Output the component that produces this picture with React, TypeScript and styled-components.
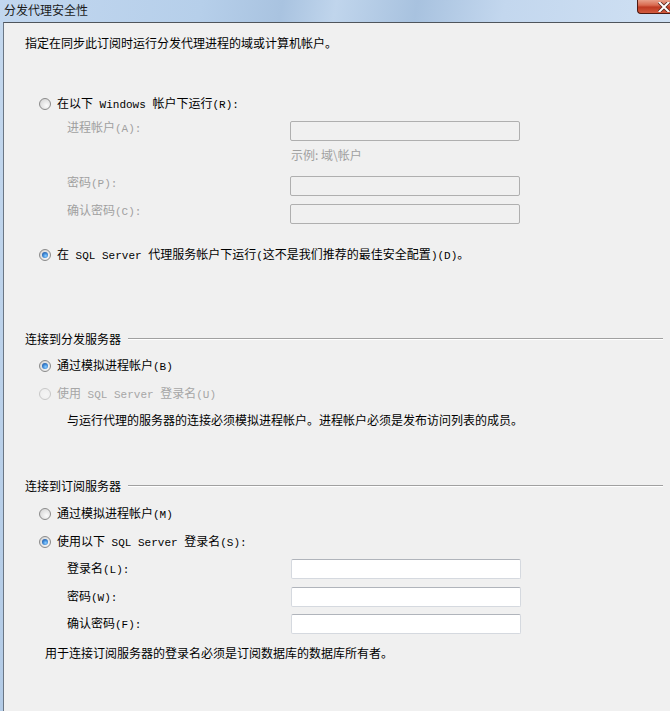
import React from 'react';
import styled, { createGlobalStyle } from 'styled-components';

const GlobalStyle = createGlobalStyle`
  html, body {
    margin: 0;
    padding: 0;
    background: #f0f0f0;
  }
  body {
    font-family: "Noto Sans CJK SC", "Noto Sans", sans-serif;
    font-size: 12px;
    color: #000;
  }
`;

const Window = styled.div`
  width: 670px;
  height: 711px;
  display: flex;
  flex-direction: column;
  overflow: hidden;
  background: linear-gradient(180deg, #c4d8ee 0%, #b3cbe6 100%);
`;

const TitleBar = styled.div`
  height: 22px;
  display: flex;
  align-items: flex-start;
  background: linear-gradient(100deg, #c2d7ef 0%, #b6cfea 30%, #a9c3e0 42%, #c0d5ec 50%, #a8c2df 62%, #c3d7ee 75%, #cfe0f3 100%);
`;

const Title = styled.span`
  padding: 2px 0 0 4px;
  line-height: 16px;
  font-size: 12px;
  color: #1a1a1a;
`;

const CloseButton = styled.div`
  margin-left: auto;
  width: 33px;
  height: 14px;
  flex-shrink: 0;
  box-sizing: border-box;
  border-left: 1px solid #4d1a12;
  border-bottom: 1px solid #4d1a12;
  border-radius: 0 0 0 4px;
  background-color: #c9462f;
  background-image: linear-gradient(180deg, #e8a08a 0%, #d96a50 40%, #bf3a22 55%, #d25a3e 100%);
  display: flex;
  align-items: center;
  padding-left: 20px;
`;

const Frame = styled.div`
  flex: 1;
  display: flex;
  padding-left: 3px;
`;

const Content = styled.div`
  flex: 1;
  background: #f0f0f0;
  border-left: 1px solid #6a7684;
  border-top: 1px solid #4f555c;
  padding: 12px 7px 0 21px;
  display: flex;
  flex-direction: column;
`;

const Text = styled.div<{ $top: number; $indent?: number; $muted?: boolean }>`
  margin-top: ${p => p.$top}px;
  margin-left: ${p => p.$indent ?? 0}px;
  line-height: 16px;
  height: 16px;
  white-space: pre;
  color: ${p => (p.$muted ? '#a0a0a0' : '#000')};
`;

const Latin = styled.span`
  font-family: "Liberation Mono", monospace;
  font-size: 11px;
  white-space: pre;
`;

const RadioRow = styled.div<{ $top: number; $disabled?: boolean }>`
  margin-top: ${p => p.$top}px;
  margin-left: 14px;
  height: 16px;
  display: flex;
  align-items: center;
  gap: 6px;
  line-height: 16px;
  white-space: pre;
  color: ${p => (p.$disabled ? '#a6a6a6' : '#000')};
`;

const RadioCircle = styled.span<{ $checked?: boolean; $disabled?: boolean }>`
  width: 12px;
  height: 12px;
  box-sizing: border-box;
  border-radius: 50%;
  border: 1px solid ${p => (p.$disabled ? '#c8c8c8' : '#8a8a8a')};
  background: ${p =>
    p.$disabled
      ? 'radial-gradient(circle at 60% 60%, #f4f4f4 0%, #ececec 100%)'
      : 'radial-gradient(circle at 65% 65%, #fbfbfb 0%, #dcdcdc 70%, #c8c8c8 100%)'};
  display: flex;
  align-items: center;
  justify-content: center;
  flex-shrink: 0;

  &::after {
    content: '';
    display: ${p => (p.$checked ? 'block' : 'none')};
    width: 6px;
    height: 6px;
    border-radius: 50%;
    background: radial-gradient(circle at 60% 65%, #8fd0ff 0%, #3f8ad8 45%, #173f83 100%);
  }
`;

const FieldRow = styled.div<{ $top: number; $center?: boolean }>`
  margin-top: ${p => p.$top}px;
  margin-left: 42px;
  display: flex;
  align-items: ${p => (p.$center ? 'center' : 'flex-start')};
  height: 20px;
`;

const FieldLabel = styled.span<{ $muted?: boolean; $width: number }>`
  width: ${p => p.$width}px;
  line-height: 12px;
  white-space: pre;
  color: ${p => (p.$muted ? '#a0a0a0' : '#000')};
`;

const Input = styled.div<{ $disabled?: boolean; $width: number }>`
  width: ${p => p.$width}px;
  height: 20px;
  box-sizing: border-box;
  border: 1px solid ${p => (p.$disabled ? '#afafaf' : '#d5d9df')};
  border-top-color: ${p => (p.$disabled ? '#afafaf' : '#b0b4bb')};
  border-radius: 2px;
  background: ${p => (p.$disabled ? '#f0f0f0' : '#fff')};
`;

const Hint = styled.div`
  margin-top: 6px;
  margin-left: 266px;
  line-height: 16px;
  height: 16px;
  color: #a0a0a0;
`;

const SectionHeader = styled.div<{ $top: number }>`
  margin-top: ${p => p.$top}px;
  height: 16px;
  display: flex;
  align-items: center;
  gap: 7px;
  line-height: 16px;
`;

const Rule = styled.div`
  flex: 1;
  height: 0;
  border-top: 1px solid #a0a0a0;
  border-bottom: 1px solid #ffffff;
  margin-top: -1px;
`;

const CloseX = () => (
  <svg width="12" height="10" viewBox="0 0 12 10">
    <path d="M1.5 0.5 L10.5 9.5 M10.5 0.5 L1.5 9.5" stroke="#5a2a22" strokeWidth="3.6" strokeLinecap="square" />
    <path d="M1.5 0.5 L10.5 9.5 M10.5 0.5 L1.5 9.5" stroke="#ffffff" strokeWidth="2" strokeLinecap="square" />
  </svg>
);

const App: React.FC = () => {
  return (
    <>
      <GlobalStyle />
      <Window>
        <TitleBar>
          <Title>分发代理安全性</Title>
          <CloseButton>
            <CloseX />
          </CloseButton>
        </TitleBar>
        <Frame>
          <Content>
            <Text $top={0}>指定在同步此订阅时运行分发代理进程的域或计算机帐户。</Text>

            <RadioRow $top={45}>
              <RadioCircle />
              <span>
                在以下<Latin> Windows </Latin>帐户下运行<Latin>(R):</Latin>
              </span>
            </RadioRow>

            <FieldRow $top={9}>
              <FieldLabel $muted $width={223}>
                进程帐户<Latin>(A):</Latin>
              </FieldLabel>
              <Input $disabled $width={230} />
            </FieldRow>
            <Hint>示例: 域\帐户</Hint>
            <FieldRow $top={13}>
              <FieldLabel $muted $width={223}>
                密码<Latin>(P):</Latin>
              </FieldLabel>
              <Input $disabled $width={230} />
            </FieldRow>
            <FieldRow $top={8}>
              <FieldLabel $muted $width={223}>
                确认密码<Latin>(C):</Latin>
              </FieldLabel>
              <Input $disabled $width={230} />
            </FieldRow>

            <RadioRow $top={23}>
              <RadioCircle $checked />
              <span>
                在<Latin> SQL Server </Latin>代理服务帐户下运行<Latin>(</Latin>这不是我们推荐的最佳安全配置<Latin>)(D)</Latin>。
              </span>
            </RadioRow>

            <SectionHeader $top={68}>
              <span>连接到分发服务器</span>
              <Rule />
            </SectionHeader>
            <RadioRow $top={11}>
              <RadioCircle $checked />
              <span>
                通过模拟进程帐户<Latin>(B)</Latin>
              </span>
            </RadioRow>
            <RadioRow $top={12} $disabled>
              <RadioCircle $disabled />
              <span>
                使用<Latin> SQL Server </Latin>登录名<Latin>(U)</Latin>
              </span>
            </RadioRow>
            <Text $top={10} $indent={42}>
              与运行代理的服务器的连接必须模拟进程帐户。进程帐户必须是发布访问列表的成员。
            </Text>

            <SectionHeader $top={50}>
              <span>连接到订阅服务器</span>
              <Rule />
            </SectionHeader>
            <RadioRow $top={12}>
              <RadioCircle />
              <span>
                通过模拟进程帐户<Latin>(M)</Latin>
              </span>
            </RadioRow>
            <RadioRow $top={12}>
              <RadioCircle $checked />
              <span>
                使用以下<Latin> SQL Server </Latin>登录名<Latin>(S):</Latin>
              </span>
            </RadioRow>

            <FieldRow $top={9} $center>
              <FieldLabel $width={224}>
                登录名<Latin>(L):</Latin>
              </FieldLabel>
              <Input $width={230} />
            </FieldRow>
            <FieldRow $top={8} $center>
              <FieldLabel $width={224}>
                密码<Latin>(W):</Latin>
              </FieldLabel>
              <Input $width={230} />
            </FieldRow>
            <FieldRow $top={7} $center>
              <FieldLabel $width={224}>
                确认密码<Latin>(F):</Latin>
              </FieldLabel>
              <Input $width={230} />
            </FieldRow>

            <Text $top={11} $indent={20}>
              用于连接订阅服务器的登录名必须是订阅数据库的数据库所有者。
            </Text>
          </Content>
        </Frame>
      </Window>
    </>
  );
};

export default App;
